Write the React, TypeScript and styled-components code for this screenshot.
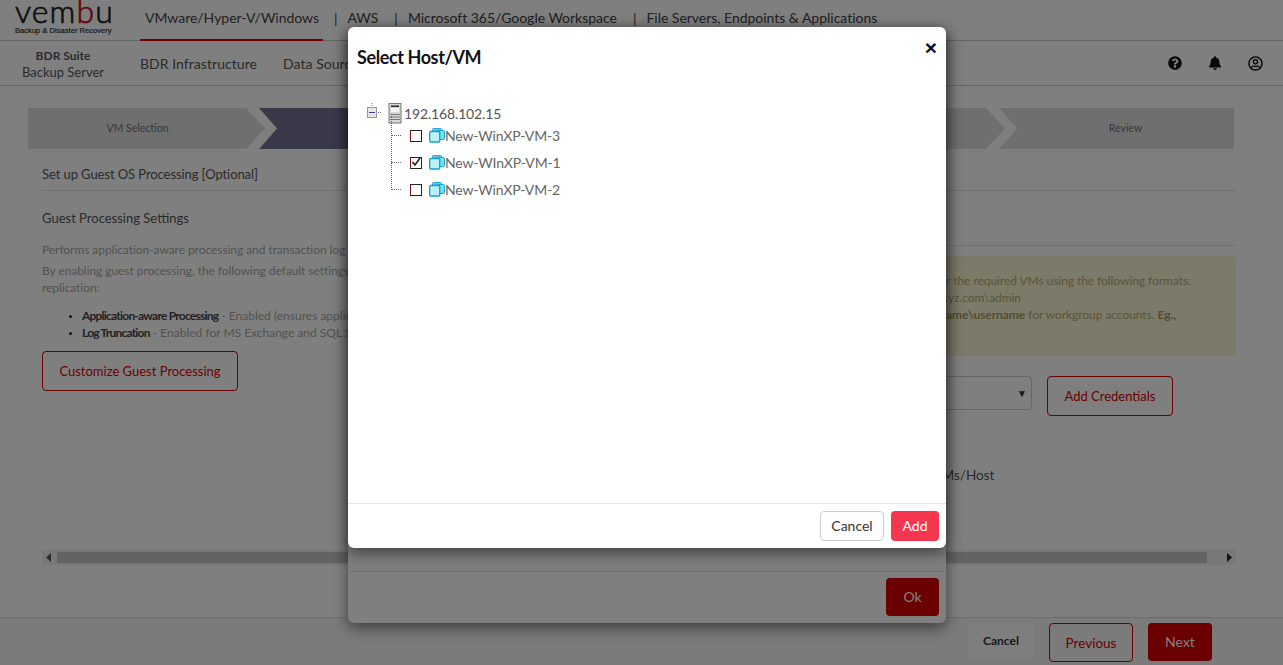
import React from "react";
import styled, { createGlobalStyle } from "styled-components";
import { FaQuestionCircle, FaBell, FaRegUserCircle } from "react-icons/fa";

const Global = createGlobalStyle`
  html, body { margin: 0; padding: 0; height: 100%; overflow: hidden; background: #fff; }
  * { box-sizing: border-box; }
  body { font-family: Lato, "Open Sans", sans-serif; }
`;

const Page = styled.div`
  position: relative;
  width: 1283px;
  height: 665px;
  display: flex;
  flex-direction: column;
  overflow: hidden;
  color: #555;
`;

const TopBar = styled.header`
  height: 41px;
  flex: none;
  display: flex;
  border-bottom: 1px solid #ccc;
`;

const LogoBox = styled.div`
  width: 140px;
  flex: none;
  padding-left: 15px;
`;

const LogoWord = styled.div`
  font: 300 32px/22px Lato, sans-serif;
  color: #222;
  -webkit-text-stroke: 0.7px #222;
  letter-spacing: 1.1px;
  height: 22px;
  b { font-weight: 300; color: #c01218; -webkit-text-stroke: 0.7px #c01218; }
`;

const LogoTag = styled.div`
  margin-top: 4px;
  font: 400 7.6px/9px "Liberation Sans", sans-serif;
  color: #333;
  white-space: nowrap;
  -webkit-text-stroke: 0.2px #333;
`;

const TopTab = styled.a<{ $active?: boolean }>`
  display: flex;
  align-items: center;
  height: 41px;
  padding: 0 5px 4px;
  font-size: 14px;
  color: #444;
  white-space: nowrap;
  border-bottom: 2px solid ${(p) => (p.$active ? "#ee0000" : "transparent")};
  letter-spacing: -0.02px;
`;

const TabActive = styled(TopTab)`
  width: 183px;
`;

const TabSep = styled.span`
  display: flex;
  align-items: center;
  height: 37px;
  font-size: 14px;
  color: #444;
  margin-left: 11px;
  margin-right: 5px;
`;

const SubBar = styled.div`
  height: 45px;
  flex: none;
  display: flex;
  align-items: center;
  border-bottom: 1px solid #ccc;
`;

const Brand = styled.div`
  width: 126px;
  text-align: center;
  flex: none;
  padding-top: 2px;
  line-height: 17px;
  font-size: 13px;
  color: #556;
  strong { display: block; font-size: 12px; font-weight: 700; }
`;

const SubLink = styled.a`
  font-size: 14px;
  color: #555;
  margin-left: 14px;
  margin-right: 12px;
  white-space: nowrap;
  letter-spacing: 0.05px;
`;

const IconGroup = styled.div`
  margin-left: auto;
  display: flex;
  align-items: center;
  gap: 26px;
  padding-right: 20px;
  color: #111;
  font-size: 14px;
`;

const Main = styled.main`
  flex: 1;
  min-height: 0;
  padding: 22px 47px 0 42px;
  display: flex;
  flex-direction: column;
`;

const Stepper = styled.div`
  display: grid;
  grid-template-columns: 237px 369px 371px 229px;
  margin-left: -14px;
  height: 41px;
`;

const Step = styled.div<{ $active?: boolean; $first?: boolean; $last?: boolean }>`
  display: flex;
  align-items: center;
  justify-content: center;
  font-size: 10.5px;
  padding: ${(p) => (p.$first ? "0 18px 2px 0" : p.$last ? "0 0 2px 18px" : "0 0 2px")};
  color: ${(p) => (p.$active ? "#fff" : "#707078")};
  background: ${(p) => (p.$active ? "#737394" : "#dedede")};
  margin-left: ${(p) => (p.$first ? "0" : "-6px")};
  clip-path: ${(p) =>
    p.$first
      ? "polygon(0 0, calc(100% - 19px) 0, 100% 50%, calc(100% - 19px) 100%, 0 100%)"
      : p.$last
      ? "polygon(0 0, 100% 0, 100% 100%, 0 100%, 18px 50%)"
      : "polygon(0 0, calc(100% - 19px) 0, 100% 50%, calc(100% - 19px) 100%, 0 100%, 18px 50%)"};
`;

const SectionTitle = styled.div`
  margin-top: 13px;
  height: 29px;
  font-size: 13px;
  line-height: 24px;
  color: #555;
  border-bottom: 1px solid #e2e2e2;
  letter-spacing: -0.08px;
`;

const Columns = styled.div`
  display: grid;
  grid-template-columns: 598px 1fr;
  flex: none;
  height: 357px;
`;

const LeftCol = styled.div`
  padding-top: 19px;
`;

const Heading = styled.div`
  font-size: 13px;
  line-height: 17px;
  color: #555;
`;

const Para = styled.p`
  margin: 14px 0 0;
  font-size: 12px;
  line-height: 17px;
  color: #a4a4a4;
  letter-spacing: -0.06px;
  & + & { margin-top: 4px; }
`;

const Bullets = styled.ul`
  margin: 11px 0 0;
  padding-left: 40px;
  font-size: 12px;
  line-height: 17px;
  color: #a4a4a4;
  li::marker { color: #222; font-size: 9px; }
  b { font-weight: 700; color: #444; letter-spacing: -0.78px; }
`;

const GhostButton = styled.button<{ $w: number; $h: number }>`
  width: ${(p) => p.$w}px;
  height: ${(p) => p.$h}px;
  background: transparent;
  border: 1px solid #d80000;
  border-radius: 4px;
  color: #d80000;
  font: 400 13px Lato, sans-serif;
  padding: 0;
`;

const CustomizeButton = styled(GhostButton)`
  margin-top: 10px;
  display: block;
`;

const RightCol = styled.div`
  padding-top: 54px;
`;

const RightRule = styled.div`
  border-top: 1px solid #e2e2e2;
`;

const Note = styled.div`
  margin-top: 10px;
  height: 100px;
  padding: 15px 0 0 0;
  background: #f8f5d2;
  border: 1px solid #f4edc4;
  border-radius: 4px;
  font-size: 12px;
  line-height: 17px;
  letter-spacing: -0.06px;
  color: #b5a878;
  text-align: right;
  b { color: #a8995e; font-weight: 700; }
`;

const NoteLine = styled.div<{ $pad: number }>`
  padding-right: ${(p) => p.$pad}px;
  white-space: nowrap;
`;

const CredRow = styled.div`
  margin-top: 20px;
  display: flex;
  justify-content: flex-end;
  align-items: flex-start;
  gap: 15px;
  padding-right: 63px;
`;

const SelectBox = styled.div`
  width: 200px;
  height: 34px;
  border: 1px solid #ccc;
  border-radius: 4px;
  display: flex;
  align-items: center;
  justify-content: flex-end;
  padding-right: 4px;
  font-size: 10px;
  color: #333;
`;

const ApplyText = styled.div`
  margin-top: 50px;
  margin-left: 223px;
  white-space: nowrap;
  font-size: 13.5px;
  line-height: 18px;
  color: #555;
`;

const ScrollBar = styled.div`
  height: 15px;
  background: #f1f1f1;
  display: flex;
  align-items: center;
  gap: 5px;
  padding: 0 4px;
  color: #555;
  margin-top: 2px;
`;

const ScrollThumb = styled.div`
  width: 1150px;
  height: 11px;
  background: #c6c6c6;
  margin-right: auto;
`;

const Footer = styled.footer`
  position: absolute;
  left: 0;
  right: 0;
  bottom: 0;
  height: 48px;
  border-top: 1px solid #ddd;
  background: #f6f6f6;
  display: flex;
  align-items: flex-start;
  padding: 5px 71px 0 0;
  justify-content: flex-end;
`;

const PlainCancel = styled.button`
  width: 66px;
  height: 35px;
  margin-right: 15px;
  border: none;
  border-radius: 4px;
  background-color: #fcfcfc;
  color: #333;
  font: 700 12px Lato, sans-serif;
  padding: 0;
`;

const RedButton = styled.button<{ $w: number; $h: number }>`
  width: ${(p) => p.$w}px;
  height: ${(p) => p.$h}px;
  border: none;
  border-radius: 4px;
  background: #d40000;
  color: #fff;
  font: 400 14px Lato, sans-serif;
  padding: 0 0 1px;
`;

const FooterGhost = styled(GhostButton)`
  margin-right: 15px;
  font-size: 13.5px;
`;

const LowerDialog = styled.div`
  position: absolute;
  left: 348px;
  top: 27px;
  width: 598px;
  height: 596px;
  background: #fff;
  border-radius: 6px;
  box-shadow: 0 5px 15px rgba(0, 0, 0, 0.5);
  display: flex;
  flex-direction: column;
  justify-content: flex-end;
`;

const LowerFoot = styled.div`
  height: 52px;
  border-top: 1px solid #e5e5e5;
  display: flex;
  justify-content: flex-end;
  padding: 6px 7px 0 0;
`;

const Backdrop = styled.div`
  position: absolute;
  inset: 0;
  background: rgba(0, 0, 0, 0.5);
`;

const Dialog = styled.div`
  position: absolute;
  left: 348px;
  top: 27px;
  width: 598px;
  height: 521px;
  background: #fff;
  border-radius: 6px;
  box-shadow: 0 5px 15px rgba(0, 0, 0, 0.5);
  display: flex;
  flex-direction: column;
`;

const DialogHead = styled.div`
  height: 59px;
  flex: none;
  display: flex;
  justify-content: space-between;
  padding: 18px 9px 0 9px;
`;

const DialogTitle = styled.h4`
  margin: 0;
  font: 700 18px/24px Lato, sans-serif;
  color: #111;
  letter-spacing: -0.4px;
`;

const CloseMark = styled.span`
  font: 700 21px/1 "Liberation Sans", sans-serif;
  color: #111;
  margin-top: -8px;
`;

const DialogBody = styled.div`
  flex: 1;
  padding: 15px 0 0 19px;
`;

const RootRow = styled.div`
  position: relative;
  height: 25px;
  display: flex;
  align-items: center;
  padding-left: 21px;
  font-size: 14px;
  letter-spacing: -0.15px;
  color: #555;
  gap: 2px;
`;

const Expander = styled.svg`
  position: absolute;
  left: 0;
  top: 2px;
`;

const TreeChildren = styled.div`
  position: relative;
  padding-left: 44px;
  margin-top: -4px;
`;

const TreeStem = styled.div`
  position: absolute;
  left: 24px;
  top: -6px;
  height: 72px;
  border-left: 1px dotted #666;
`;

const ChildRow = styled.div`
  position: relative;
  height: 27px;
  display: flex;
  align-items: center;
  font-size: 14px;
  letter-spacing: -0.14px;
  color: #666;
  &::before {
    content: "";
    position: absolute;
    left: -20px;
    width: 10px;
    top: 13px;
    border-top: 1px dotted #666;
  }
`;

const CheckMark = styled.span`
  width: 12px;
  height: 12px;
  border: 1.5px solid #222;
  border-left-color: #7a1010;
  flex: none;
  margin-right: 7px;
  margin-left: -1px;
  display: block;
  background: #fff;
  position: relative;
  svg { position: absolute; left: 0; top: -1px; }
`;

const DialogFoot = styled.div`
  height: 45px;
  flex: none;
  border-top: 1px solid #e5e5e5;
  display: flex;
  justify-content: flex-end;
  gap: 7px;
  padding: 7px 7px 0 0;
`;

const ModalCancel = styled.button`
  width: 64px;
  height: 30px;
  background: #fff;
  border: 1px solid #ccc;
  border-radius: 4px;
  color: #333;
  font: 400 14px Lato, sans-serif;
  padding: 0 0 2px;
`;

const ModalAdd = styled.button`
  width: 48px;
  height: 30px;
  background: #f6364f;
  border: none;
  border-radius: 4px;
  color: #fff;
  font: 400 14px Lato, sans-serif;
  padding: 0 0 2px;
`;

const ServerIcon = () => (
  <svg width="14" height="21" viewBox="0 0 14 21" style={{ flex: "none" }}>
    <rect x="1" y="0.5" width="12" height="19.5" fill="#d8d8d8" stroke="#777" />
    <rect x="3" y="2.5" width="8" height="1.5" fill="#222" />
    <rect x="3" y="5" width="8" height="4" fill="#f2f2f2" />
    <path d="M2 11.5h10M2 14h10M2 16.5h10" stroke="#777" />
  </svg>
);

const VmIcon = () => (
  <svg width="16" height="15" viewBox="0 0 16 15" style={{ flex: "none" }}>
    <rect x="3.5" y="0.5" width="9" height="4" rx="1" fill="#6fbfe8" stroke="#2aa9d6" />
    <rect x="7.5" y="2.5" width="8" height="9" rx="1" fill="#6fe4f0" stroke="#14a8d0" />
    <rect x="0.7" y="3.5" width="10" height="10.5" rx="1" fill="#bdf0f8" stroke="#0fa4cf" strokeWidth="1.3" />
  </svg>
);

const vms = [
  { name: "New-WinXP-VM-3", on: false },
  { name: "New-WInXP-VM-1", on: true },
  { name: "New-WinXP-VM-2", on: false },
];

export default function App() {
  return (
    <Page>
      <Global />
      <TopBar>
        <LogoBox>
          <LogoWord>vem<b>b</b>u</LogoWord>
          <LogoTag>Backup &amp; Disaster Recovery</LogoTag>
        </LogoBox>
        <TabActive $active>VMware/Hyper-V/Windows</TabActive>
        <TabSep>|</TabSep>
        <TopTab>AWS</TopTab>
        <TabSep>|</TabSep>
        <TopTab>Microsoft 365/Google Workspace</TopTab>
        <TabSep>|</TabSep>
        <TopTab>File Servers, Endpoints &amp; Applications</TopTab>
      </TopBar>
      <SubBar>
        <Brand>
          <strong>BDR Suite</strong>
          Backup Server
        </Brand>
        <SubLink>BDR Infrastructure</SubLink>
        <SubLink>Data Sources</SubLink>
        <IconGroup>
          <FaQuestionCircle />
          <FaBell />
          <FaRegUserCircle size={15} />
        </IconGroup>
      </SubBar>
      <Main>
        <Stepper>
          <Step $first>VM Selection</Step>
          <Step $active>Guest Processing</Step>
          <Step>Schedule</Step>
          <Step $last>Review</Step>
        </Stepper>
        <SectionTitle>Set up Guest OS Processing [Optional]</SectionTitle>
        <Columns>
          <LeftCol>
            <Heading>Guest Processing Settings</Heading>
            <Para>Performs application-aware processing and transaction log truncation on the selected VMs.</Para>
            <Para>
              By enabling guest processing, the following default settings will be applied to this backup or
              <br />
              replication:
            </Para>
            <Bullets>
              <li><b>Application-aware Processing</b> - Enabled (ensures application consistency)</li>
              <li><b>Log Truncation</b> - Enabled for MS Exchange and SQL Server</li>
            </Bullets>
            <CustomizeButton $w={196} $h={40}>Customize Guest Processing</CustomizeButton>
          </LeftCol>
          <RightCol>
            <RightRule />
            <Note>
              <NoteLine $pad={44}>Enter guest credentials for the required VMs using the following formats:</NoteLine>
              <NoteLine $pad={214}>Domain accounts: xyz.com\admin</NoteLine>
              <NoteLine $pad={59}>Use <b>hostname\username</b> for workgroup accounts. <b>Eg.,</b></NoteLine>
            </Note>
            <CredRow>
              <SelectBox>▼</SelectBox>
              <GhostButton $w={126} $h={40}>Add Credentials</GhostButton>
            </CredRow>
            <ApplyText>Apply to all VMs/Host</ApplyText>
          </RightCol>
        </Columns>
        <ScrollBar>
          <svg width="6" height="9" viewBox="0 0 6 9"><path d="M5 0v9L0 4.5z" fill="#555" /></svg>
          <ScrollThumb />
          <svg width="6" height="9" viewBox="0 0 6 9"><path d="M1 0v9l5-4.5z" fill="#222" /></svg>
        </ScrollBar>
      </Main>
      <Footer>
        <PlainCancel>Cancel</PlainCancel>
        <FooterGhost $w={84} $h={39}>Previous</FooterGhost>
        <RedButton $w={64} $h={38}>Next</RedButton>
      </Footer>
      <LowerDialog>
        <LowerFoot>
          <RedButton $w={53} $h={38}>Ok</RedButton>
        </LowerFoot>
      </LowerDialog>
      <Backdrop />
      <Dialog>
        <DialogHead>
          <DialogTitle>Select Host/VM</DialogTitle>
          <CloseMark>×</CloseMark>
        </DialogHead>
        <DialogBody>
          <RootRow>
            <Expander width="16" height="18" viewBox="0 0 16 18">
              <path d="M5 0v4M11 9.5h4" stroke="#777" strokeDasharray="1 1" fill="none" />
              <rect x="0.5" y="4.5" width="9" height="10" fill="#e6e6e6" stroke="#999" />
              <path d="M2 9.5h6" stroke="#3a3a9a" />
            </Expander>
            <ServerIcon />
            192.168.102.15
          </RootRow>
          <TreeChildren>
            <TreeStem />
            {vms.map((vm) => (
              <ChildRow key={vm.name}>
                <CheckMark>
                  {vm.on && (
                    <svg width="10" height="10" viewBox="0 0 10 10">
                      <path d="M1.5 5l2.5 3 5-7" stroke="#222" strokeWidth="1.6" fill="none" />
                    </svg>
                  )}
                </CheckMark>
                <VmIcon />
                {vm.name}
              </ChildRow>
            ))}
          </TreeChildren>
        </DialogBody>
        <DialogFoot>
          <ModalCancel>Cancel</ModalCancel>
          <ModalAdd>Add</ModalAdd>
        </DialogFoot>
      </Dialog>
    </Page>
  );
}
